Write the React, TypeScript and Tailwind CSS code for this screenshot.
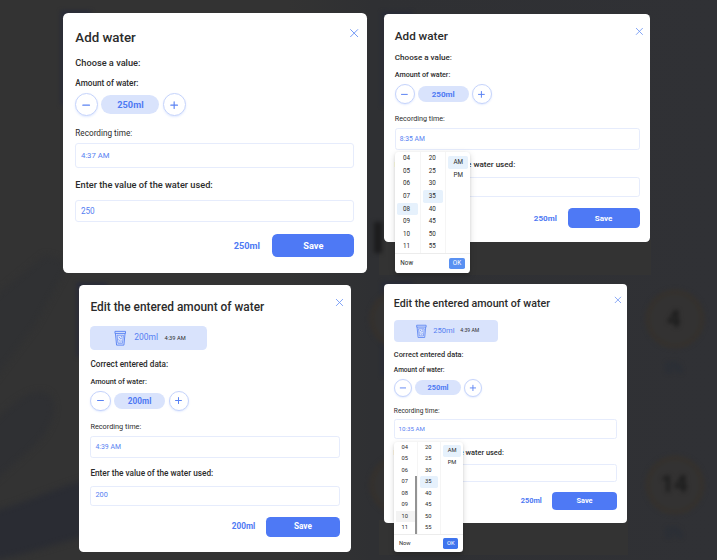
import React from "react";

const hours = ["04", "05", "06", "07", "08", "09", "10", "11"];
const minutes = ["20", "25", "30", "35", "40", "45", "50", "55"];

function CloseIcon() {
  return (
    <svg className="size-6" viewBox="0 0 24 24" fill="none" stroke="#6f96f5" strokeWidth="1.9">
      <path d="M4.5 4.5 19.5 19.5M19.5 4.5 4.5 19.5" />
    </svg>
  );
}

function GlassIcon() {
  return (
    <svg className="size-9" viewBox="0 0 36 36" fill="none" stroke="#5680f2" strokeWidth="2">
      <path d="M6.5 3h23v4.500h-23z" />
      <path d="M7.500 7.500 10 33h16l2.500-25.500" />
      <path d="M11 11.500 13 29h10l2-17.500z" strokeWidth="1.500" />
      <path d="M15 15l2 2M20 14l2 1M18 19l3-1M14.500 21l2 2M20 23l1.500 2M17 26h1.500" strokeWidth="1.800" />
    </svg>
  );
}

function RoundButton({ plus }: { plus?: boolean }) {
  return (
    <button className="flex size-11 items-center justify-center rounded-full border-2 border-[#c6d4fb] bg-white shadow-[0_2px_4px_rgba(64,123,255,0.15)]">
      <svg className="size-6" viewBox="0 0 24 24" stroke="#5a82f3" strokeWidth="2.200" strokeLinecap="round">
        <path d={plus ? "M5.500 12h13M12 5.500v13" : "M5.500 12h13"} />
      </svg>
    </button>
  );
}

function TimePicker({ hour, scrolling }: { hour: string; scrolling?: boolean }) {
  return (
    <div className="absolute top-[51.5px] left-[-2px] z-10 w-[167px] rounded-lg bg-white text-sm text-[#2b2b2b] shadow-[0_6px_16px_rgba(0,0,0,0.14),0_3px_6px_rgba(0,0,0,0.10)]">
      <div className="flex h-[227px] border-b border-[#ececec]">
        <ul className="relative w-14 overflow-hidden">
          {hours.map((h) => (
            <li
              key={h}
              className={
                "h-7 pl-[14px] leading-7 " +
                (h !== hour ? "mx-1" : scrolling ? "ml-1 bg-[#f3f3f3]" : "mx-1 rounded bg-[#e6f1fc]")
              }
            >
              {h}
            </li>
          ))}
          {scrolling && <li className="absolute top-[85px] right-0 h-[139px] w-[5px] bg-[#939393]" />}
        </ul>
        <ul className="w-14 border-l border-[#f5f5f5]">
          {minutes.map((m) => (
            <li
              key={m}
              className={"mx-1 h-7 rounded pl-[13px] leading-7 " + (m === "35" ? "bg-[#e6f1fc]" : "")}
            >
              {m}
            </li>
          ))}
        </ul>
        <ul className="w-[55px] border-l border-[#f5f5f5] pt-[9px]">
          <li className="mx-1 h-7 rounded bg-[#e6f1fc] pl-[12px] leading-7">AM</li>
          <li className="mx-1 h-7 pl-[12px] leading-7">PM</li>
        </ul>
      </div>
      <div className="flex h-[42px] items-center justify-between pr-[11px] pl-3">
        <span>Now</span>
        <span
          className={
            "flex h-[25px] w-9 items-center justify-center rounded text-white " +
            (scrolling ? "bg-[#3f74ee]" : "bg-[#5a91f2]")
          }
        >
          OK
        </span>
      </div>
    </div>
  );
}

type ModalProps = {
  edit?: boolean;
  amount: string;
  time: string;
  recordTime?: string;
  picker?: React.ReactNode;
};

function WaterModal({ edit, amount, time, recordTime, picker }: ModalProps) {
  return (
    <section className="relative w-[592px] rounded-[10px] bg-white px-6 pt-[32.5px] pb-8 text-[#2b2b2b]">
      <button className="absolute top-[26px] right-3">
        <CloseIcon />
      </button>
      <h2 className="text-[26px] leading-8 font-medium">
        {edit ? "Edit the entered amount of water" : "Add water"}
      </h2>
      {edit && (
        <div className="mt-6 flex h-[52px] w-[254px] items-center rounded-[10px] bg-[#d9e3fc] pl-12">
          <GlassIcon />
          <span className="ml-3 text-[18.500px] text-[#5680f2]">{amount}ml</span>
          <span className="ml-[14px] text-[12.500px]">{recordTime}</span>
        </div>
      )}
      <p className="mt-[23px] text-lg leading-5 font-medium">
        {edit ? "Correct entered data:" : "Choose a value:"}
      </p>
      <p className={"text-base leading-5 font-medium " + (edit ? "mt-4" : "mt-[17.5px]")}>Amount of water:</p>
      <div className="mt-[11px] flex items-center gap-[7px]">
        <RoundButton />
        <span className="flex h-9 w-[113px] items-center justify-center rounded-full bg-[#d9e3fc] text-lg font-bold text-[#4e79f3]">
          {amount}ml
        </span>
        <RoundButton plus />
      </div>
      <p className={"text-base leading-5 " + (edit ? "mt-6" : "mt-[22.5px]")}>Recording time:</p>
      <div className="relative mt-[11px] flex h-12 items-center rounded-md border border-[#e6ecfc] pl-[9px] text-[15px] text-[#5680f2]">
        {time}
        {picker}
      </div>
      <p className="mt-6 text-lg leading-5 font-medium">Enter the value of the water used:</p>
      <div
        className={
          "flex h-11 items-center rounded-md border border-[#e6ecfc] pl-[9px] text-base text-[#5680f2] " +
          (edit ? "mt-4" : "mt-[17.5px]")
        }
      >
        {picker ? "" : amount}
      </div>
      <div className="mt-6 flex items-center justify-end gap-6">
        <span className="text-lg font-bold text-[#4e79f3]">{amount}ml</span>
        <button className="h-11 w-40 rounded-[10px] bg-[#4e79f5] text-lg font-bold text-white">Save</button>
      </div>
    </section>
  );
}

function Backdrop() {
  return (
    <svg className="absolute inset-0 size-full" viewBox="0 0 717 560">
      <defs>
        <filter id="soft" x="-30%" y="-30%" width="160%" height="160%" colorInterpolationFilters="sRGB">
          <feGaussianBlur stdDeviation="3" />
        </filter>
        <filter id="faint" x="-50%" y="-50%" width="200%" height="200%" colorInterpolationFilters="sRGB">
          <feGaussianBlur stdDeviation="2" />
        </filter>
        <linearGradient id="wall">
          <stop offset="0" stopColor="#333333" />
          <stop offset="0.4" stopColor="#333333" />
          <stop offset="0.52" stopColor="#2f3033" />
          <stop offset="1" stopColor="#303135" />
        </linearGradient>
      </defs>
      <rect width="717" height="560" fill="url(#wall)" />
      <g filter="url(#soft)">
        <path d="M-10 340V300L45 255 70 262 35 325-10 385z" fill="#303133" />
        <path d="M-10 425C10 405 30 388 45 392 60 400 55 425 35 445L-10 485z" fill="#2f3033" />
        <path d="M-10 512C20 505 50 490 90 478V535C50 545 20 557-10 560z" fill="#2a2c33" />
      </g>
      <path d="M379 240h272v35H379zM379 520h249v35H379z" fill="#333333" />
      <path d="M61 11h30v4H64v90h-3zM382 12h30v4h-28v90h-2zM77 283h30v4H80v70h-3zM382 282h30v4h-28v90h-2z" fill="#26293a" filter="url(#faint)" />
      <rect x="374" y="222" width="8" height="31" fill="#1c1c1d" filter="url(#faint)" />
      <g filter="url(#faint)" fill="#333232" stroke="#35312d" strokeWidth="5">
        <circle cx="675" cy="319" r="27" />
        <circle cx="675" cy="485" r="27" />
        <circle cx="399" cy="319" r="27" />
        <circle cx="399" cy="485" r="27" />
      </g>
      <g filter="url(#faint)" textAnchor="middle" fontFamily="Roboto, sans-serif">
        <text x="674" y="327" fontSize="24" fontWeight="700" fill="#1c1c1c">4</text>
        <text x="674" y="492" fontSize="24" fontWeight="700" fill="#1c1c1c">14</text>
        <text x="674" y="373" fontSize="14" fill="#242c38">0%</text>
        <text x="674" y="538" fontSize="14" fill="#242c38">0%</text>
      </g>
    </svg>
  );
}

export default function App() {
  return (
    <main className="relative h-[560px] w-[717px] overflow-hidden bg-[#313233] font-['Roboto',sans-serif]">
      <Backdrop />
      <div className="relative flex items-start pl-[63px]">
        <div className="flex w-[321px] flex-col pt-[13.4px]">
          <div className="h-[272px]">
            <div className="[zoom:0.5130]">
              <WaterModal amount="250" time="4:37 AM" />
            </div>
          </div>
          <div className="ml-[16.4px]">
            <div className="[zoom:0.4580]">
              <WaterModal edit amount="200" time="4:39 AM" recordTime="4:39 AM" />
            </div>
          </div>
        </div>
        <div className="flex flex-col pt-[14px]">
          <div className="h-[270px]">
            <div className="[zoom:0.4500]">
              <WaterModal amount="250" time="8:35 AM" picker={<TimePicker hour="08" />} />
            </div>
          </div>
          <div className="[zoom:0.4110]">
            <WaterModal
              edit
              amount="250"
              time="10:35 AM"
              recordTime="4:39 AM"
              picker={<TimePicker hour="10" scrolling />}
            />
          </div>
        </div>
      </div>
    </main>
  );
}
